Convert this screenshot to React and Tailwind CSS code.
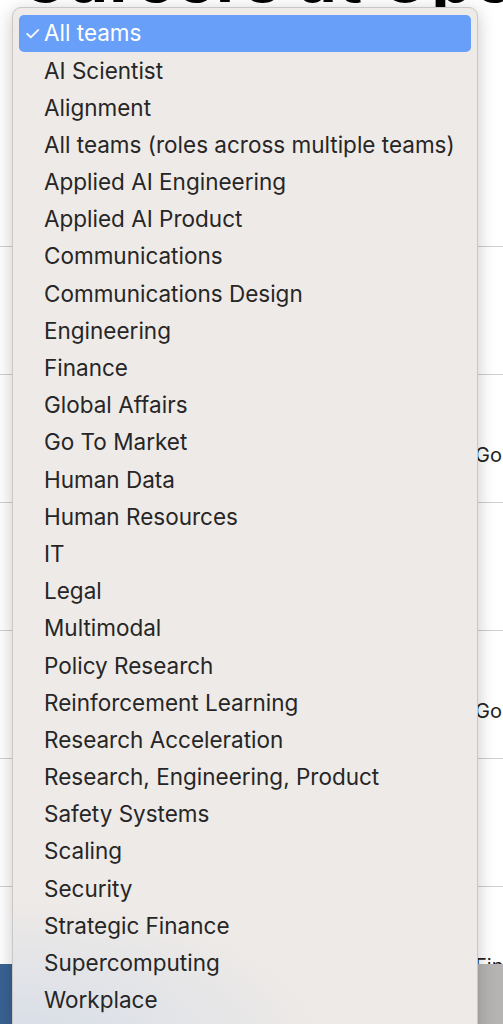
import { useState } from 'react';

// Teams in the filter dropdown
const teams = [
  "All teams",
  "AI Scientist",
  "Alignment",
  "All teams (roles across multiple teams)",
  "Applied AI Engineering",
  "Applied AI Product",
  "Communications",
  "Communications Design",
  "Engineering",
  "Finance",
  "Global Affairs",
  "Go To Market",
  "Human Data",
  "Human Resources",
  "IT",
  "Legal",
  "Multimodal",
  "Policy Research",
  "Reinforcement Learning",
  "Research Acceleration",
  "Research, Engineering, Product",
  "Safety Systems",
  "Scaling",
  "Security",
  "Strategic Finance",
  "Supercomputing",
  "Workplace"
];

// Rows of the job list behind the menu
const rows = ["", "Go To Market", "", "Go To Market", ""];

const App = () => {
  const [selected, setSelected] = useState(0);

  return (
    <div className="relative w-[503px] h-[1024px] overflow-hidden bg-white font-['Inter','Noto_Sans',sans-serif]">
      {/* page behind the menu */}
      <div className="flex flex-col">
        <h1 className="mt-[-55px] pl-[20px] text-[66px] leading-[66px] font-bold text-black whitespace-nowrap tracking-[1px]">
          Careers at OpenAI
        </h1>
        <div className="h-[236px] border-b border-[#cfcfcf]" />
        {rows.map((dept, i) => (
          <div key={i} className="h-[128px] border-b border-[#cfcfcf] flex items-center justify-end pt-[32px]">
            <span className="w-[25px] overflow-hidden whitespace-nowrap text-[20px] text-[#222]">
              <span className="ml-[-3px]">{dept}</span>
            </span>
          </div>
        ))}
        <div className="h-[77px] flex items-end justify-end overflow-hidden">
          <span className="w-[25px] whitespace-nowrap text-[20px] text-[#222] leading-[20px] mb-[-12px]">
            <span className="ml-[-3px]">Finance</span>
          </span>
        </div>
        <div className="flex h-[80px]">
          <div className="flex-1 bg-[#3a6394]" />
          <div className="w-[40px] bg-[#b5b4b3]" />
        </div>
      </div>

      {/* dropdown menu */}
      <div className="absolute left-[12px] top-[7px] w-[466px] h-[1040px] rounded-[9px] border border-[#cbc7c4] bg-[#eeeae7] shadow-[0_4px_18px_rgba(0,0,0,0.22)] px-[6px] pt-[7px] overflow-hidden">
        <div className="absolute left-0 bottom-0 w-[320px] h-[150px] bg-[radial-gradient(ellipse_at_bottom_left,#d6dde8,transparent_70%)] pointer-events-none" />
        <ul className="relative flex flex-col">
          {teams.map((team, index) => (
            <li
              key={team}
              onClick={() => setSelected(index)}
              className={`h-[37.2px] flex items-center rounded-[5px] cursor-default text-[22.5px] leading-none whitespace-nowrap ${
                selected === index ? 'bg-[#68a0f9] text-white' : 'text-[#262626]'
              }`}
            >
              <span className="w-[25px] pl-[5px] text-[19px]">{selected === index ? '✓' : ''}</span>
              <span>{team}</span>
            </li>
          ))}
        </ul>
      </div>
    </div>
  );
};

export default App;
